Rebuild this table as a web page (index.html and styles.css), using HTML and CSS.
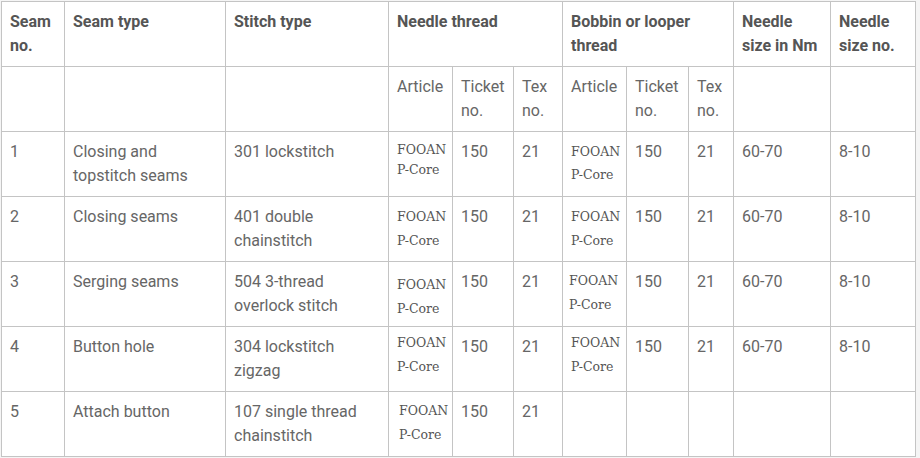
FILE: index.html
```html
<!DOCTYPE html>
<html lang="en">
<head>
<meta charset="utf-8">
<title>Seam and thread specification</title>
<link rel="stylesheet" href="styles.css">
</head>
<body>
<div class="sheet">
  <div class="spec">
    <div class="cell th">Seam<br>no.</div>
    <div class="cell th">Seam type</div>
    <div class="cell th">Stitch type</div>
    <div class="cell th span3">Needle thread</div>
    <div class="cell th span3">Bobbin or looper<br>thread</div>
    <div class="cell th">Needle<br>size in Nm</div>
    <div class="cell th">Needle<br>size no.</div>

    <div class="cell"></div>
    <div class="cell"></div>
    <div class="cell"></div>
    <div class="cell">Article</div>
    <div class="cell">Ticket<br>no.</div>
    <div class="cell">Tex<br>no.</div>
    <div class="cell">Article</div>
    <div class="cell">Ticket<br>no.</div>
    <div class="cell">Tex<br>no.</div>
    <div class="cell"></div>
    <div class="cell"></div>

    <div class="cell">1</div>
    <div class="cell">Closing and<br>topstitch seams</div>
    <div class="cell">301 lockstitch</div>
    <div class="cell"><span class="art tight">FOOAN<br>P-Core</span></div>
    <div class="cell">150</div>
    <div class="cell">21</div>
    <div class="cell"><span class="art snug">FOOAN<br>P-Core</span></div>
    <div class="cell">150</div>
    <div class="cell">21</div>
    <div class="cell">60-70</div>
    <div class="cell">8-10</div>

    <div class="cell">2</div>
    <div class="cell">Closing seams</div>
    <div class="cell">401 double<br>chainstitch</div>
    <div class="cell"><span class="art">FOOAN<br>P-Core</span></div>
    <div class="cell">150</div>
    <div class="cell">21</div>
    <div class="cell"><span class="art">FOOAN<br>P-Core</span></div>
    <div class="cell">150</div>
    <div class="cell">21</div>
    <div class="cell">60-70</div>
    <div class="cell">8-10</div>

    <div class="cell">3</div>
    <div class="cell">Serging seams</div>
    <div class="cell">504 3-thread<br>overlock stitch</div>
    <div class="cell"><span class="art drop3">FOOAN<br>P-Core</span></div>
    <div class="cell">150</div>
    <div class="cell">21</div>
    <div class="cell"><span class="art lift1 left2">FOOAN<br>P-Core</span></div>
    <div class="cell">150</div>
    <div class="cell">21</div>
    <div class="cell">60-70</div>
    <div class="cell">8-10</div>

    <div class="cell">4</div>
    <div class="cell">Button hole</div>
    <div class="cell">304 lockstitch<br>zigzag</div>
    <div class="cell"><span class="art lift4">FOOAN<br>P-Core</span></div>
    <div class="cell">150</div>
    <div class="cell">21</div>
    <div class="cell"><span class="art lift4">FOOAN<br>P-Core</span></div>
    <div class="cell">150</div>
    <div class="cell">21</div>
    <div class="cell">60-70</div>
    <div class="cell">8-10</div>

    <div class="cell">5</div>
    <div class="cell">Attach button</div>
    <div class="cell">107 single thread<br>chainstitch</div>
    <div class="cell"><span class="art lift1 right2">FOOAN<br>P-Core</span></div>
    <div class="cell">150</div>
    <div class="cell">21</div>
    <div class="cell"></div>
    <div class="cell"></div>
    <div class="cell"></div>
    <div class="cell"></div>
    <div class="cell"></div>
  </div>
</div>
</body>
</html>
```

FILE: styles.css
```css
html, body {
  margin: 0;
  padding: 0;
  background: #f5f5f5;
}

.sheet {
  padding: 1px 0 0 1px;
}

.spec {
  display: grid;
  grid-template-columns: 63px 161px 163px 64px 61px 49px 64px 62px 45px 97px 85px;
  grid-auto-rows: 65px;
  width: max-content;
  background: #ffffff;
  border-left: 1px solid #c4c4c4;
  border-top: 1px solid #c4c4c4;
  font-family: Roboto, "Liberation Sans", sans-serif;
  font-size: 16px;
  line-height: 24px;
  color: #666666;
}

.cell {
  box-sizing: border-box;
  padding: 8px;
  border-right: 1px solid #c4c4c4;
  border-bottom: 1px solid #c4c4c4;
  white-space: nowrap;
}

.th {
  font-weight: 700;
  color: #555555;
}

.span3 {
  grid-column: span 3;
}

.art {
  display: block;
  font-family: "DejaVu Serif", serif;
  font-size: 12.5px;
  line-height: 24px;
  color: #555555;
}

.tight { line-height: 20px; }
.snug { line-height: 23px; }
.drop3 { margin-top: 3px; }
.lift1 { margin-top: -1px; }
.lift4 { margin-top: -4px; }
.left2 { margin-left: -2px; }
.right2 { margin-left: 2px; }
```
